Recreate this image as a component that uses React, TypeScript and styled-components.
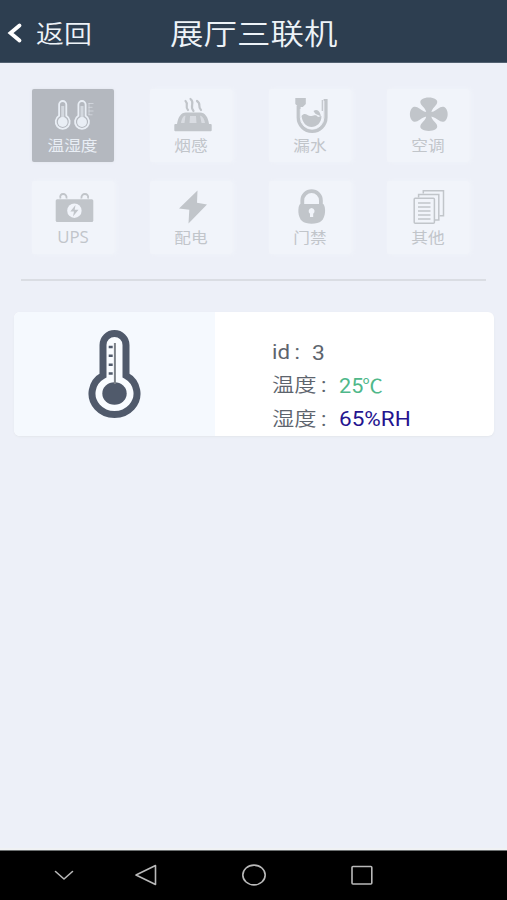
import React from "react";
import styled, { createGlobalStyle } from "styled-components";

const GlobalStyle = createGlobalStyle`
  * { box-sizing: border-box; }
  body {
    margin: 0;
    background: #edf0f8;
    font-family: Roboto, "Noto Sans CJK SC", sans-serif;
  }
`;

const Screen = styled.div`
  width: 507px;
  height: 900px;
  display: flex;
  flex-direction: column;
  overflow: hidden;
  background: #edf0f8;
`;

const Header = styled.header`
  height: 63px;
  flex: none;
  display: grid;
  grid-template-columns: 170px 1fr;
  align-items: center;
  padding-top: 8px;
  background: #2d3e50;
  border-bottom: 1px solid #526171;
  color: #edf3f8;
`;

const BackButton = styled.div`
  display: flex;
  align-items: center;
  gap: 13px;
  padding-left: 7px;
`;

const BackArrow = styled.svg`
  width: 16px;
  height: 22px;
  margin-top: -4px;
`;

const Stretched = styled.span<{ $size: number; $ratio?: number }>`
  display: inline-block;
  font-size: ${(p) => p.$size}px;
  line-height: 1.2;
  white-space: nowrap;
  transform: scaleX(${(p) => p.$ratio ?? 1.14});
  transform-origin: left center;
`;

const BackLabel = styled(Stretched)`
  font-weight: 350;
`;

const Title = styled(Stretched)`
  font-weight: 350;
  padding-top: 1px;
`;

const Content = styled.main`
  flex: 1;
  display: flex;
  flex-direction: column;
  border-bottom: 2px solid #f0f2f4;
`;

const TileGrid = styled.div`
  display: grid;
  grid-template-columns: repeat(4, 82px);
  column-gap: 36.4px;
  row-gap: 19px;
  padding: 26px 0 0 32px;
`;

const Tile = styled.div<{ $active?: boolean }>`
  height: 73px;
  display: flex;
  flex-direction: column;
  align-items: center;
  border-radius: 2px;
  background: ${(p) => (p.$active ? "#b4b8bf" : "#f1f4fa")};
  color: ${(p) => (p.$active ? "#e9eef5" : "#c1c5ca")};
  --tile: ${(p) => (p.$active ? "#b4b8bf" : "#f1f4fa")};
  box-shadow: ${(p) => (p.$active ? "0 0 3px #dfe3ea" : "2px 0 4px #f1f4fa")};
`;

const TileIcon = styled.svg`
  width: 82px;
  height: 46px;
  flex: none;
  display: block;
`;

const TileLabel = styled.span<{ $latin?: boolean }>`
  font-size: ${(p) => (p.$latin ? 16 : 15)}px;
  line-height: 20px;
  transform: scaleX(${(p) => (p.$latin ? 1.05 : 1.11)});
  font-family: "Open Sans", "Noto Sans CJK SC", sans-serif;
`;

const Divider = styled.hr`
  width: 465px;
  height: 2px;
  margin: 25px 0 0 21px;
  border: 0;
  background: #dadde3;
`;

const Card = styled.section`
  display: grid;
  grid-template-columns: 201px 1fr;
  width: 480px;
  height: 124px;
  margin: 31px 0 0 14px;
  border-radius: 6px;
  overflow: hidden;
  background: #fff;
  box-shadow: 0 1px 2px #e4e7ed;
`;

const CardPicture = styled.div`
  display: flex;
  justify-content: center;
  padding-top: 18px;
  background: #f5f9fe;
`;

const Readings = styled.div`
  padding: 24px 0 0 56.5px;
`;

const Reading = styled.div`
  display: grid;
  grid-template-columns: 67.5px 1fr;
  height: 33.4px;
  align-items: center;
  color: #5d646d;
`;

const ReadingId = styled(Reading)`
  grid-template-columns: 40.5px 1fr;
`;

const Value = styled(Stretched)<{ $color?: string }>`
  color: ${(p) => p.$color ?? "inherit"};
  justify-self: start;
`;

const Degree = styled.span`
  font-size: 19px;
  margin-left: -1px;
`;

const Name = styled(Stretched)`
  justify-self: start;
`;

const Hanzi = styled.span`
  font-weight: 350;
`;

const Colon = styled.span`
  margin-left: 4px;
`;

const NavBar = styled.nav`
  height: 50px;
  flex: none;
  display: grid;
  grid-template-columns: 128px 36px 180px 35px;
  align-items: center;
  justify-items: center;
  background: #000;
  border-top: 1px solid #6d7071;
`;

const NavIcon = styled.svg`
  width: 28px;
  height: 28px;
  margin-top: -1px;
  fill: none;
  stroke: #b9b9b9;
  stroke-width: 1.6;
  stroke-linejoin: round;
  stroke-linecap: round;
`;

const TemperatureIcon = () => (
  <>
    {[30.7, 50].map((x) => (
      <g key={x}>
        <path
          d={`M${x - 3.6} 26.8V15.6a3.6 3.6 0 0 1 7.2 0V26.8a7 7 0 1 1-7.2 0Z`}
          fill="none" stroke="currentColor" strokeWidth="1.8"
        />
        <circle cx={x} cy="33" r="4.9" fill="currentColor" />
        <path d={`M${x} 17V32`} stroke="currentColor" strokeWidth="3" opacity=".6" />
      </g>
    ))}
    <path d="M56.500 14.500h5M56.500 18.300h4M56.500 22h5M56.500 25.800h4M57 14v12" stroke="currentColor" strokeWidth="1" opacity=".5" fill="none" />
  </>
);

const SmokeIcon = () => (
  <>
    <path d="M35.500 12c3.500 3.500-1 5 2.500 9M40.500 10c5 4-1.500 6.500 3 12M47 12c5 3.500 0 5 4 9" fill="none" stroke="currentColor" strokeWidth="2.200" strokeLinecap="round" />
    <path d="M27 35c1-7 4-11.500 9-11.500h14c5 0 8 4.500 9 11.500Z" fill="currentColor" />
    <path d="M31 34c.5-4 2-7 4.500-7.500L34.500 34ZM40 27h6l.5 7h-7ZM50 26.500c3 1 4.500 4 5 7.500h-3.500Z" fill="var(--tile)" opacity=".5" />
    <rect x="24.300" y="35" width="37.400" height="7.300" rx="1" fill="currentColor" />
  </>
);

const LeakIcon = () => (
  <>
    <path d="M26.300 9h10.500v6l-3 3h-4.500l-3-3Z" fill="currentColor" />
    <path d="M29.600 17v11.500a13.400 13.400 0 0 0 27 0V10" fill="none" stroke="currentColor" strokeWidth="4" />
    <path d="M31.300 20v8.500a11.800 11.800 0 0 0 23.600 0V12" fill="none" stroke="var(--tile)" strokeWidth=".9" />
    <path d="M53.300 11v11" stroke="currentColor" strokeWidth="1.200" />
    <path d="M32.500 27c4-5 6 1 10 0s5-1 6.500 1l3.500-1c0 7-5 11-10 11s-9-4-10-11Z" fill="currentColor" />
    <path d="M44.500 22c4-3 7 1 7.500 6-2.500-3-5-1-7.500-6Z" fill="currentColor" />
  </>
);

const FanIcon = () => (
  <g fill="currentColor">
    {[0, 90, 180, 270].map((angle) => (
      <path
        key={angle}
        transform={`translate(41.8 25.3) scale(1.130 1) rotate(${angle})`}
        d="M-2 1C-1.800-3-3-5-5.500-8-7.500-10.500-8.500-13-6-15-3-17.300 3-17.300 6-15 8.500-13 7.500-10.500 5.500-8 3-5 1.800-3 2 1Z"
      />
    ))}
    <circle cx="41.800" cy="25.300" r="3.200" />
  </g>
);

const BatteryIcon = () => (
  <>
    <path d="M28.500 17.500c-2-6 7-6 6 0M49.500 17.500c-1-6 8-6 6.500 0" fill="none" stroke="currentColor" strokeWidth="1.800" />
    <rect x="23.700" y="18.300" width="37.600" height="22.700" rx="1.500" fill="currentColor" />
    <circle cx="42.400" cy="29.700" r="7.200" fill="var(--tile)" />
    <path d="m43.500 24-5.200 6.500h3.700L41 35.500l5.500-6.700h-3.800Z" fill="currentColor" />
  </>
);

const BoltIcon = () => (
  <path d="M47.500 9.500 29 27.500l10.300 1.300L38.500 42.500l18.500-19-10-1.800Z" fill="currentColor" />
);

const LockIcon = () => (
  <>
    <path d="M33.300 28V19.500a9.300 9.300 0 0 1 18.600 0V28" fill="none" stroke="currentColor" strokeWidth="3.800" />
    <path d="M31 23h23.400c2.500 3 2.500 13-2 17-4 3.500-15.400 3.500-19.400 0-4.500-4-4.500-14-2-17Z" fill="currentColor" />
    <path d="M42.600 27a3.200 3.200 0 0 1 1.600 5.800V36h-3.200v-3.200A3.200 3.200 0 0 1 42.600 27Z" fill="var(--tile)" />
  </>
);

const PagesIcon = () => (
  <g fill="none" stroke="currentColor" strokeWidth="1.500">
    <path d="M36.300 12.500V9.700h20.200v25h-4" />
    <path d="M31.600 16.500v-3h20.200v25.500h-4" />
    <rect x="27.200" y="17.300" width="20.200" height="25" rx="1" />
    <path d="M31 22h12.500M31 26h12.500M31 30h12.500M31 34h12.500M31 38h12.500" strokeWidth="1.300" />
  </g>
);

const tiles = [
  { label: "温湿度", Icon: TemperatureIcon, active: true },
  { label: "烟感", Icon: SmokeIcon },
  { label: "漏水", Icon: LeakIcon },
  { label: "空调", Icon: FanIcon },
  { label: "UPS", Icon: BatteryIcon, latin: true },
  { label: "配电", Icon: BoltIcon },
  { label: "门禁", Icon: LockIcon },
  { label: "其他", Icon: PagesIcon },
];

const Thermometer = () => (
  <svg width="54" height="90" viewBox="0 0 54 90">
    <path
      d="M15 45.500V15a11.500 11.500 0 0 1 23 0v30.500a22.500 21 0 1 1-23 0Z"
      fill="#f9fcff" stroke="#505a6b" strokeWidth="7"
    />
    <ellipse cx="26.500" cy="63.500" rx="12.200" ry="11.200" fill="#505a6b" />
    <path d="M26.900 13V54" stroke="#7c8288" strokeWidth="2" />
    <path d="M20.700 17h4M20.700 25.800h4M20.700 34.700h4M20.700 43.500h4" stroke="#505a6b" strokeWidth="2.600" />
  </svg>
);

export default function App() {
  return (
    <>
      <GlobalStyle />
      <Screen>
        <Header>
          <BackButton>
            <BackArrow viewBox="0 0 16 22">
              <path d="M12.500 3.500 3.500 11l9 7.500" fill="none" stroke="#fff" strokeWidth="3.800" strokeLinecap="round" />
            </BackArrow>
            <BackLabel $size={24.5}>返回</BackLabel>
          </BackButton>
          <Title $size={29} $ratio={1.155}>展厅三联机</Title>
        </Header>
        <Content>
          <TileGrid>
            {tiles.map(({ label, Icon, active, latin }) => (
              <Tile key={label} $active={active}>
                <TileIcon viewBox="0 0 82 46"><Icon /></TileIcon>
                <TileLabel $latin={latin}>{label}</TileLabel>
              </Tile>
            ))}
          </TileGrid>
          <Divider />
          <Card>
            <CardPicture><Thermometer /></CardPicture>
            <Readings>
              <ReadingId>
                <Name $size={19.5}>id<Colon>:</Colon></Name>
                <Value $size={20}>3</Value>
              </ReadingId>
              <Reading>
                <Name $size={19.5}><Hanzi>温度</Hanzi><Colon>:</Colon></Name>
                <Value $size={20} $color="#4fb88a" $ratio={1.08}>25<Degree>℃</Degree></Value>
              </Reading>
              <Reading>
                <Name $size={19.5}><Hanzi>湿度</Hanzi><Colon>:</Colon></Name>
                <Value $size={20} $color="#24148f" $ratio={1.125}>65%RH</Value>
              </Reading>
            </Readings>
          </Card>
        </Content>
        <NavBar>
          <NavIcon viewBox="0 0 28 28"><path d="m5.500 10.500 8.500 7.500 8.500-7.500" /></NavIcon>
          <NavIcon viewBox="0 0 28 28"><path d="M23.500 4.500v19L4 14Z" /></NavIcon>
          <NavIcon viewBox="0 0 28 28"><ellipse cx="14" cy="14" rx="11.200" ry="9.900" /></NavIcon>
          <NavIcon viewBox="0 0 28 28"><rect x="4" y="5.500" width="19.800" height="17.500" rx="1" /></NavIcon>
        </NavBar>
      </Screen>
    </>
  );
}
